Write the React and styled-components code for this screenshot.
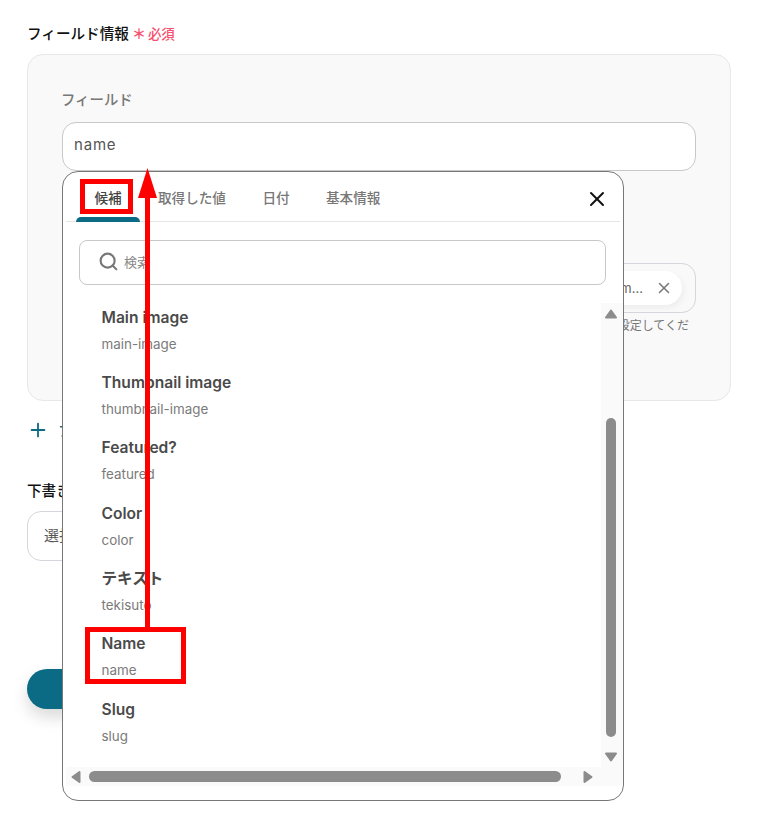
import React from "react";
import styled, { createGlobalStyle } from "styled-components";
import { Search, X, Plus } from "lucide-react";

const items = [
    { title: "Main image", slug: "main-image" },
    { title: "Thumbnail image", slug: "thumbnail-image" },
    { title: "Featured?", slug: "featured" },
    { title: "Color", slug: "color" },
    { title: "テキスト", slug: "tekisuto" },
    { title: "Name", slug: "name" },
    { title: "Slug", slug: "slug" },
];

const tabs = ["候補", "取得した値", "日付", "基本情報"];

// small rounded triangle used on the scrollbars, points up by default
const Arrow = ({ rotate }) => (
    <ArrowIcon width="14" height="14" viewBox="0 0 14 14" $rotate={rotate}>
        <polygon
            points="7,3.5 12,10.5 2,10.5"
            fill="#8c8c8c"
            stroke="#8c8c8c"
            strokeWidth="2"
            strokeLinejoin="round"
        />
    </ArrowIcon>
);

const App = () => {
    return (
        <Page>
            <GlobalStyle />
            <SectionTitle>
                フィールド情報<Required><b>＊</b>必須</Required>
            </SectionTitle>
            <Card>
                <FieldLabel>フィールド</FieldLabel>
                <Input>name</Input>
                <SecondLabel>値</SecondLabel>
                <TokenInput>
                    <Chip>
                        <span>nam</span>
                        <X size={18} strokeWidth={2} color="#777" />
                    </Chip>
                </TokenInput>
                <Hint>フィールドの値を設定してくだ</Hint>
            </Card>
            <AddRow>
                <Plus size={22} strokeWidth={2} color="#0b6b84" />
                <span>フィールド情報を追加</span>
            </AddRow>
            <DraftTitle>下書き</DraftTitle>
            <Select>選択</Select>
            <SaveButton />

            <Popup>
                <TabBar>
                    {tabs.map((tab, i) => (
                        <Tab key={tab} $active={i === 0}>{tab}</Tab>
                    ))}
                    <CloseButton>
                        <X size={24} strokeWidth={2} color="#111" />
                    </CloseButton>
                </TabBar>
                <SearchBox>
                    <Search size={21} strokeWidth={2.4} color="#777" />
                    <span>検索</span>
                </SearchBox>
                <ScrollArea>
                    <List>
                        {items.map((item) => (
                            <Item key={item.slug}>
                                <h4>{item.title}</h4>
                                <p>{item.slug}</p>
                            </Item>
                        ))}
                    </List>
                    <VerticalBar>
                        <Arrow rotate={0} />
                        <VerticalThumb />
                        <Arrow rotate={180} />
                    </VerticalBar>
                    <HorizontalBar>
                        <Arrow rotate={270} />
                        <HorizontalThumb />
                        <Arrow rotate={90} />
                    </HorizontalBar>
                </ScrollArea>
            </Popup>

            <Highlight $left={80} $top={179} $width={53} $height={35} />
            <Highlight $left={85} $top={627} $width={101} $height={57} />
            <ArrowSvg width="30" height="470" viewBox="0 0 30 470">
                <rect x="12" y="28" width="5" height="436" fill="#f00" />
                <polygon points="14.5,0 24,30 5,30" fill="#f00" />
            </ArrowSvg>
        </Page>
    );
};

const GlobalStyle = createGlobalStyle`
    html, body {
        margin: 0;
        padding: 0;
        background: #fff;
    }
    body {
        font-family: Inter, "Noto Sans CJK JP", sans-serif;
    }
`;

const Page = styled.div`
    position: relative;
    width: 763px;
    height: 837px;
    overflow: hidden;
    padding: 23px 32px 0 27px;
    box-sizing: border-box;
    background: #fff;
`;

const SectionTitle = styled.div`
    height: 21px;
    line-height: 21px;
    font-size: 14.6px;
    font-weight: 500;
    color: #111;
`;

const Required = styled.span`
    margin-left: 3px;
    font-size: 13.5px;
    font-weight: 500;
    color: #f8506e;

    b {
        font-size: 14px;
        font-weight: 700;
        margin-right: 2px;
    }
`;

const Card = styled.div`
    margin-top: 10px;
    height: 347px;
    box-sizing: border-box;
    padding: 34px 34px 0 34px;
    background: #f9f9f9;
    border: 1px solid #e8e8e8;
    border-radius: 16px;
`;

const FieldLabel = styled.div`
    height: 22px;
    line-height: 22px;
    font-size: 14.4px;
    font-weight: 500;
    color: #777;
    margin-left: -1px;
`;

const SecondLabel = styled(FieldLabel)`
    margin-top: 59px;
    margin-left: 2px;
`;

const Input = styled.div`
    margin-top: 11px;
    height: 49px;
    box-sizing: border-box;
    padding: 0 11px 4px;
    display: flex;
    align-items: center;
    background: #fff;
    border: 1px solid #c8c8c8;
    border-radius: 14px;
    font-size: 15px;
    letter-spacing: 0.8px;
    color: #555;
`;

const TokenInput = styled.div`
    margin-top: 11px;
    height: 50px;
    box-sizing: border-box;
    padding: 0 13px;
    display: flex;
    align-items: center;
    justify-content: flex-end;
    background: #f9f9f9;
    border: 1px solid #d6d6dc;
    border-radius: 14px;
`;

const Chip = styled.div`
    height: 34px;
    width: 220px;
    box-sizing: border-box;
    padding: 0 9px 0 12px;
    display: flex;
    align-items: center;
    justify-content: flex-end;
    gap: 12px;
    background: #fff;
    border-radius: 17px;
    box-shadow: 2px 3px 6px rgba(0, 0, 0, 0.05);
    font-size: 13px;
    color: #666;

    span::after {
        content: "...";
    }
`;

const Hint = styled.div`
    margin-top: 4px;
    padding-right: 7px;
    text-align: right;
    font-size: 12px;
    line-height: 18px;
    color: #777;
`;

const AddRow = styled.div`
    margin-top: 19px;
    height: 20px;
    display: flex;
    align-items: center;
    gap: 9px;
    font-size: 14px;
    font-weight: 500;
    color: #0b6b84;
`;

const DraftTitle = styled.div`
    margin-top: 41px;
    height: 21px;
    line-height: 21px;
    font-size: 14.6px;
    font-weight: 500;
    color: #111;
`;

const Select = styled.div`
    margin-top: 9px;
    width: 420px;
    height: 50px;
    box-sizing: border-box;
    padding: 0 16px 4px;
    display: flex;
    align-items: center;
    background: #fff;
    border: 1px solid #d3d6dc;
    border-radius: 14px;
    font-size: 15px;
    color: #555;
`;

const SaveButton = styled.div`
    margin-top: 108px;
    width: 200px;
    height: 40px;
    background: #0b6b84;
    border-radius: 20px;
    box-shadow: 0 8px 16px rgba(0, 0, 0, 0.15);
`;

const Popup = styled.div`
    position: absolute;
    left: 62px;
    top: 171px;
    width: 562px;
    height: 630px;
    box-sizing: border-box;
    display: flex;
    flex-direction: column;
    background: #fff;
    border: 1px solid #777;
    border-radius: 16px;
    overflow: hidden;
`;

const TabBar = styled.div`
    position: relative;
    flex: none;
    height: 50px;
    margin: 0 3px;
    box-sizing: border-box;
    padding-left: 10px;
    display: flex;
    align-items: stretch;
    border-bottom: 1px solid #e6e6e6;
`;

const Tab = styled.div`
    position: relative;
    min-width: 64px;
    padding: 1px 18px 0;
    box-sizing: border-box;
    display: flex;
    align-items: center;
    justify-content: center;
    font-size: 13.6px;
    font-weight: 500;
    color: ${(props) => (props.$active ? "#444" : "#777")};

    &::after {
        content: "";
        display: ${(props) => (props.$active ? "block" : "none")};
        position: absolute;
        left: 0;
        right: 0;
        bottom: -1px;
        height: 5px;
        background: #0b6b84;
        border-radius: 6px 6px 0 0;
    }
`;

const CloseButton = styled.div`
    position: absolute;
    right: 11px;
    top: 15px;
    display: flex;
`;

const SearchBox = styled.div`
    flex: none;
    margin: 18px 17px 0 16px;
    height: 45px;
    box-sizing: border-box;
    padding: 0 0 2px 18px;
    display: flex;
    align-items: center;
    gap: 5px;
    border: 1px solid #c8c8c8;
    border-radius: 8px;
    font-size: 13px;
    color: #888;
`;

const ScrollArea = styled.div`
    flex: 1;
    min-height: 0;
    margin: 18px 0 14px 3px;
    display: grid;
    grid-template-columns: 1fr 22px;
    grid-template-rows: 1fr 19px;
`;

const List = styled.div`
    overflow: hidden;
    padding-left: 35.5px;
`;

const Item = styled.div`
    height: 65.33px;

    h4 {
        margin: 0;
        padding-top: 3.8px;
        font-size: 15.6px;
        line-height: 22px;
        font-weight: 600;
        color: #4a4a4a;
    }

    p {
        margin: 5px 0 0;
        font-size: 13.4px;
        line-height: 20px;
        color: #7a7a7a;
    }
`;

const VerticalBar = styled.div`
    background: #fafafa;
    display: flex;
    flex-direction: column;
    align-items: center;
    padding: 4px 2px 0 0;
    box-sizing: border-box;
`;

const VerticalThumb = styled.div`
    flex: none;
    margin: 97px 0 13px;
    width: 10px;
    height: 319px;
    background: #8c8c8c;
    border-radius: 5px;
`;

const HorizontalBar = styled.div`
    grid-column: 1 / -1;
    background: #fafafa;
    display: flex;
    align-items: center;
    padding-left: 3px;
`;

const HorizontalThumb = styled.div`
    margin-left: 6px;
    width: 472px;
    height: 11px;
    background: #8c8c8c;
    border-radius: 6px;
`;

const ArrowIcon = styled.svg`
    flex: none;
    display: block;
    transform: rotate(${(props) => props.$rotate}deg);

    ${HorizontalThumb} + & {
        margin-left: 20px;
    }
`;

const Highlight = styled.div`
    position: absolute;
    left: ${(props) => props.$left}px;
    top: ${(props) => props.$top}px;
    width: ${(props) => props.$width}px;
    height: ${(props) => props.$height}px;
    box-sizing: border-box;
    border: 5px solid #f00;
`;

const ArrowSvg = styled.svg`
    position: absolute;
    left: 133px;
    top: 168px;
`;

export default App;
